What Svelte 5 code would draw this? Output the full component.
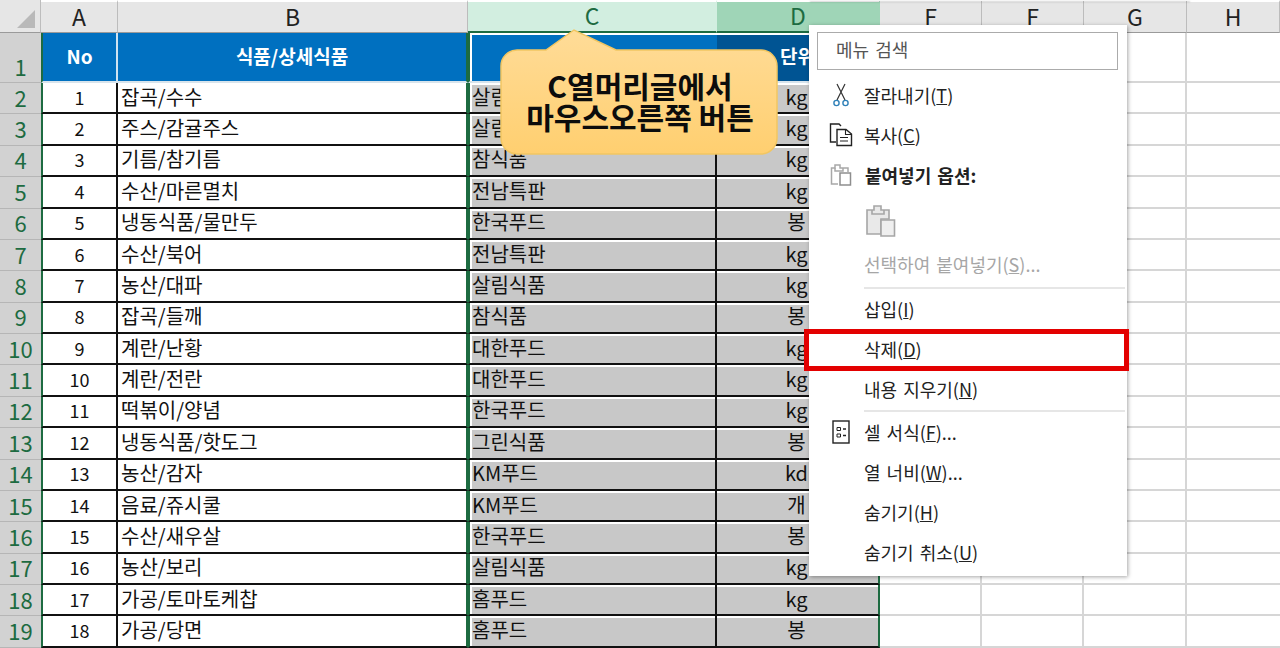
<script>
  const heads = ['A','B','C','D','F','F','G','H'];
  const data = [
    ['잡곡/수수','살림식품','kg'],['주스/감귤주스','살림식품','kg'],['기름/참기름','참식품','kg'],
    ['수산/마른멸치','전남특판','kg'],['냉동식품/물만두','한국푸드','봉'],['수산/북어','전남특판','kg'],
    ['농산/대파','살림식품','kg'],['잡곡/들깨','참식품','봉'],['계란/난황','대한푸드','kg'],
    ['계란/전란','대한푸드','kg'],['떡볶이/양념','한국푸드','kg'],['냉동식품/핫도그','그린식품','봉'],
    ['농산/감자','KM푸드','kd'],['음료/쥬시쿨','KM푸드','개'],['수산/새우살','한국푸드','봉'],
    ['농산/보리','살림식품','kg'],['가공/토마토케찹','홈푸드','kg'],['가공/당면','홈푸드','봉']
  ];
</script>

<div class="page">
  <div class="sheet">
    <div class="corner">
      <svg width="20" height="20" viewBox="0 0 20 20"><path d="M19 1V19H1Z" fill="#b9b9b9" /></svg>
    </div>
    {#each heads as h, i}
      <div class="colhead" class:selc={i === 2} class:seld={i === 3}>{h}</div>
    {/each}

    <div class="rowhead first">1</div>
    <div class="cell th a">No</div>
    <div class="cell th b">식품/상세식품</div>
    <div class="cell th c"></div>
    <div class="cell th d">단위</div>
    <div class="cell blank"></div><div class="cell blank"></div><div class="cell blank"></div><div class="cell blank end"></div>

    {#each data as r, i}
      <div class="rowhead">{i + 2}</div>
      <div class="cell a num">{i + 1}</div>
      <div class="cell b txt">{r[0]}</div>
      <div class="cell c gray">{r[1]}</div>
      <div class="cell d gray">{r[2]}</div>
      <div class="cell blank"></div><div class="cell blank"></div><div class="cell blank"></div><div class="cell blank end"></div>
    {/each}
  </div>

  <div class="ribbon-edge"></div>

  <div class="callout">
    <svg class="callout-bg" width="282" height="128" viewBox="0 0 282 128">
      <defs>
        <linearGradient id="cg" x1="0" y1="0" x2="0" y2="1">
          <stop offset="0" stop-color="#ffdc98" />
          <stop offset="1" stop-color="#ffcf70" />
        </linearGradient>
      </defs>
      <path d="M18 22H47L75 2L117 22H262A16 16 0 0 1 278 38V110A16 16 0 0 1 262 126H18A16 16 0 0 1 2 110V38A16 16 0 0 1 18 22Z" fill="url(#cg)" stroke="#f2c661" stroke-width="1.5" />
    </svg>
    <div class="callout-text">C열머리글에서<br />마우스오른쪽 버튼</div>
  </div>

  <div class="menu">
    <div class="search">메뉴 검색</div>
    <div class="item">
      <span class="ico">
        <svg width="18" height="24" viewBox="0 0 18 24" fill="none">
          <path d="M5 1L13 17M13 1L5 17" stroke="#333" stroke-width="1.2" />
          <circle cx="4.500" cy="20" r="2.600" stroke="#2f80b8" stroke-width="1.4" />
          <circle cx="13.500" cy="20" r="2.600" stroke="#2f80b8" stroke-width="1.4" />
        </svg>
      </span>
      <span>잘라내기(<u>T</u>)</span>
    </div>
    <div class="item">
      <span class="ico">
        <svg width="24" height="24" viewBox="0 0 24 24" fill="none" stroke="#222" stroke-width="1.4">
          <path d="M7 19H1.5V1H10L12 3" />
          <path d="M8 6.5H17L22.5 11V22.5H8Z" />
          <path d="M16.5 6.5V11.5H22.5M11 14.5H19M11 18H19" stroke-width="1.1" />
        </svg>
      </span>
      <span>복사(<u>C</u>)</span>
    </div>
    <div class="item">
      <span class="ico">
        <svg width="22" height="24" viewBox="0 0 22 24" fill="none" stroke="#a8a8a8" stroke-width="1.5">
          <path d="M8 21H1.5V5H5V2H10V5H18V9" />
          <path d="M10 10H20.5V22H10Z" stroke="#8e8e8e" />
          <path d="M5 5V8H13V5" />
        </svg>
      </span>
      <b>붙여넣기 옵션:</b>
    </div>
    <div class="paste-row">
      <svg width="30" height="34" viewBox="0 0 30 34" fill="#e9e9e9" stroke="#a6a6a6" stroke-width="1.6">
        <path d="M15 30H1V6H8V2H15V6H23V15H15Z" />
        <path d="M15 16H28.5V32H15Z" fill="#efefef" />
        <path d="M6 6V10H18V6" fill="none" />
      </svg>
    </div>
    <div class="item dim"><span class="ico"></span><span>선택하여 붙여넣기(<u>S</u>)...</span></div>
    <div class="sep"></div>
    <div class="item"><span class="ico"></span><span>삽입(<u>I</u>)</span></div>
    <div class="item"><span class="ico"></span><span>삭제(<u>D</u>)</span></div>
    <div class="item"><span class="ico"></span><span>내용 지우기(<u>N</u>)</span></div>
    <div class="sep tight"></div>
    <div class="item">
      <span class="ico">
        <svg width="18" height="24" viewBox="0 0 18 24" fill="none" stroke="#222">
          <rect x="1" y="1" width="16" height="22" stroke-width="1.4" />
          <path d="M5 7.5H8.5V10.5H5ZM5 14H8.5V17H5Z" stroke-width="1" />
          <path d="M11 9H14M11 15.500H14" stroke-width="1.4" />
        </svg>
      </span>
      <span>셀 서식(<u>F</u>)...</span>
    </div>
    <div class="item"><span class="ico"></span><span>열 너비(<u>W</u>)...</span></div>
    <div class="item"><span class="ico"></span><span>숨기기(<u>H</u>)</span></div>
    <div class="item"><span class="ico"></span><span>숨기기 취소(<u>U</u>)</span></div>
  </div>

  <div class="redbox"></div>
</div>

<style>
  :global(body) { margin: 0; background: #fff; }
  .page {
    position: relative;
    width: 1280px;
    height: 648px;
    overflow: hidden;
    font-family: "Noto Sans CJK KR", "Noto Sans", sans-serif;
    color: #111;
  }
  .sheet {
    display: grid;
    grid-template-columns: 41px 77px 350px 249px 163px 102px 102px 103px 93px;
    grid-template-rows: 33px 50px repeat(18, 31.39px);
    background: #fff;
  }
  .corner {
    background: #e6e6e6;
    border-bottom: 1px solid #9a9a9a;
    border-right: 1px solid #bdbdbd;
    box-sizing: border-box;
    padding: 9px 0 0 16px;
    line-height: 0;
  }
  .colhead {
    background: #e6e6e6;
    border-right: 1px solid #bcbcbc;
    border-top: 2px solid #fff;
    border-bottom: 1px solid #9a9a9a;
    box-sizing: border-box;
    display: flex;
    align-items: center;
    justify-content: center;
    font-size: 23px;
    line-height: 1;
    color: #222;
    padding-bottom: 2px;
  }
  .colhead.selc { background: #d2eee0; color: #1d6b41; border-right-color: #d2eee0; border-bottom: 2px solid #1d6b41; }
  .colhead.seld { background: #9fd5b7; color: #1d6b41; border-right-color: #9fd5b7; border-bottom: 2px solid #1d6b41; }
  .rowhead {
    background: #d2d2d2;
    color: #1d6b41;
    font-size: 22px;
    line-height: 1;
    border-bottom: 1px solid #b6b6b6;
    box-sizing: border-box;
    display: flex;
    align-items: center;
    justify-content: center;
    padding-bottom: 3px;
  }
  .rowhead.first { align-items: flex-end; padding-bottom: 5px; }
  .cell {
    box-sizing: border-box;
    border-bottom: 2px solid #111;
    font-size: 20px;
    line-height: 1;
    display: flex;
    align-items: center;
    min-width: 0;
    white-space: nowrap;
    overflow: hidden;
    padding-bottom: 2px;
  }
  .a { border-left: 2px solid #1d6b41; justify-content: center; border-right: 2px solid #111; }
  .b { border-right: 2px solid #1d6b41; padding-left: 3px; }
  .c { border-left: 2px solid #1d6b41; padding-left: 1px; }
  .d { border-right: 2px solid #1d6b41; justify-content: center; }
  .num { font-size: 18px; }
  .gray {
    background: #c8c8c8;
    background-clip: padding-box;
    box-shadow: inset 0 2px 0 #fff;
  }
  .c.gray { box-shadow: inset 0 2px 0 #fff, inset 2px 0 0 #fff; border-right: 2px solid #111; padding-left: 2px; }
  .d.gray { padding-right: 2px; }
  .th {
    background: #0070c0;
    color: #fff;
    font-weight: 700;
    font-size: 19px;
    justify-content: center;
    border-bottom: 2px solid #d8e4ec;
    padding-bottom: 3px;
  }
  .th.a { border-right: 2px solid #cfe3f1; }
  .th.b { padding-left: 0; }
  .th.c { box-shadow: inset 0 2px 0 #fff, inset 2px 0 0 #fff; padding-left: 0; }
  .th.d { background: #005493; box-shadow: inset 0 2px 0 #fff; }
  .blank {
    border-bottom: 2px solid #d6d6d6;
    border-right: 2px solid #d6d6d6;
  }
  .end { border-right: none; }

  .ribbon-edge {
    position: absolute;
    left: 810px;
    top: 0;
    width: 380px;
    height: 1px;
    background: #f6f6f6;
    box-shadow: 0 1px 2px rgba(0, 0, 0, 0.25);
  }

  .callout { position: absolute; left: 499px; top: 28px; width: 282px; height: 128px; }
  .callout-bg { position: absolute; left: 0; top: 0; }
  .callout-text {
    position: absolute;
    left: 2px;
    right: 2px;
    top: 42px;
    text-align: center;
    font-weight: 700;
    font-size: 30px;
    line-height: 31px;
    color: #0c0c0c;
    white-space: nowrap;
  }

  .menu {
    position: absolute;
    left: 809px;
    top: 25px;
    width: 318px;
    height: 551px;
    box-sizing: border-box;
    padding: 7px 9px 0 0;
    background: #fff;
    box-shadow: 1px 1px 4px rgba(0, 0, 0, 0.35);
    font-size: 18px;
    color: #222;
    word-spacing: 2px;
  }
  .search {
    margin-left: 8px;
    height: 38px;
    box-sizing: border-box;
    border: 1px solid #ababab;
    padding: 0 0 5px 18px;
    display: flex;
    align-items: center;
    color: #555;
    margin-bottom: 5px;
  }
  .item {
    display: flex;
    align-items: center;
    height: 40px;
    white-space: pre;
  }
  .ico {
    width: 55px;
    flex: none;
    display: flex;
    align-items: center;
    justify-content: center;
    padding-left: 8px;
    box-sizing: border-box;
  }
  .item b { font-weight: 700; margin-left: 1px; }
  .paste-row { height: 51px; padding-left: 57px; display: flex; align-items: center; }
  .dim { color: #a6a6a6; margin-top: -2px; }
  .sep { height: 2px; margin: 3px -7px 0 55px; background: #e6e6e6; }
  .sep.tight { margin-top: 1px; }
  .redbox {
    position: absolute;
    left: 804px;
    top: 329px;
    width: 325px;
    height: 42px;
    box-sizing: border-box;
    border: 5px solid #e30000;
  }
</style>
